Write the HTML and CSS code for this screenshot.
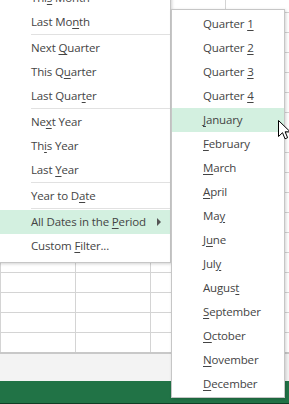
FILE: index.html
```html
<!DOCTYPE html>
<html>
<head>
    <meta charset="utf-8">
    <title>Date Filters</title>
    <link rel="stylesheet" href="styles.css">
</head>

<body>
    <div class="sheet"></div>
    <div class="tabs"></div>
    <div class="status"></div>

    <div class="menu main">
        <div class="item">Thi<u>s</u> Month</div>
        <div class="item">Last Mo<u>n</u>th</div>
        <div class="sep"></div>
        <div class="item">Next <u>Q</u>uarter</div>
        <div class="item">This Q<u>u</u>arter</div>
        <div class="item">Last Quar<u>t</u>er</div>
        <div class="sep"></div>
        <div class="item">Ne<u>x</u>t Year</div>
        <div class="item">Th<u>i</u>s Year</div>
        <div class="item">Last <u>Y</u>ear</div>
        <div class="sep"></div>
        <div class="item">Year to D<u>a</u>te</div>
        <div class="sep"></div>
        <div class="item active has-sub">All Dates in the <u>P</u>eriod<span class="arrow"></span></div>
        <div class="item">Custom <u>F</u>ilter...</div>
    </div>

    <div class="menu sub">
        <div class="item">Quarter <u>1</u></div>
        <div class="item">Quarter <u>2</u></div>
        <div class="item">Quarter <u>3</u></div>
        <div class="item">Quarter <u>4</u></div>
        <div class="item active"><u>J</u>anuary</div>
        <div class="item"><u>F</u>ebruary</div>
        <div class="item"><u>M</u>arch</div>
        <div class="item"><u>A</u>pril</div>
        <div class="item">Ma<u>y</u></div>
        <div class="item">J<u>u</u>ne</div>
        <div class="item">Jul<u>y</u></div>
        <div class="item">Augus<u>t</u></div>
        <div class="item"><u>S</u>eptember</div>
        <div class="item"><u>O</u>ctober</div>
        <div class="item"><u>N</u>ovember</div>
        <div class="item"><u>D</u>ecember</div>
    </div>

    <svg class="cursor" width="13" height="20" viewBox="0 0 13 20">
        <path d="M0.5 0.5 L0.5 16.5 L4.5 12.7 L7 18.8 L9.6 17.7 L7.1 11.8 L12.2 11.8 Z" fill="#fff" stroke="#000" stroke-width="1"/>
    </svg>
</body>
</html>
```

FILE: styles.css
```css
body {
    margin: 0;
    width: 289px;
    height: 404px;
    overflow: hidden;
    position: relative;
    background: #fff;
    font-family: "Open Sans", "Liberation Sans", sans-serif;
    font-size: 11.5px;
    letter-spacing: -0.15px;
    color: #444;
}

.sheet {
    height: 352px;
    border-bottom: 2px solid #c8c8c8;
    background-color: #fff;
    background-image:
        linear-gradient(#d4d4d4 1px, transparent 1px),
        linear-gradient(90deg, #d4d4d4 1px, transparent 1px);
    background-size: 289px 20px, 75px 404px;
    background-position: 0 12px, 75px 0;
}

.tabs {
    height: 27px;
    background: #f3f3f3;
}

.status {
    height: 22px;
    background: #217346;
    border-bottom: 1px solid #0f3f25;
}

.menu {
    position: absolute;
    box-sizing: border-box;
    background: #fff;
    border: 1px solid #c6c6c6;
    box-shadow: 1px 1px 3px rgba(0, 0, 0, 0.18);
}

.main {
    left: -2px;
    top: -17px;
    width: 173px;
    padding: 2px 0 4px;
}

.sub {
    left: 171px;
    top: 9px;
    width: 114px;
    padding: 2px 0 1px;
}

.item {
    height: 24px;
    line-height: 24px;
    padding-left: 32px;
    white-space: nowrap;
    position: relative;
}

.sub .item {
    padding-left: 31px;
}

.item u {
    text-decoration: underline;
    text-underline-offset: 2px;
}

.item.active {
    background: #d3f0e0;
}

.sep {
    height: 1px;
    margin: 0 0 1px 32px;
    background: #e1e1e1;
}

.arrow {
    position: absolute;
    right: 9px;
    top: 8px;
    width: 0;
    height: 0;
    border-top: 4px solid transparent;
    border-bottom: 4px solid transparent;
    border-left: 4px solid #555;
}

.cursor {
    position: absolute;
    left: 278px;
    top: 120px;
}
```
